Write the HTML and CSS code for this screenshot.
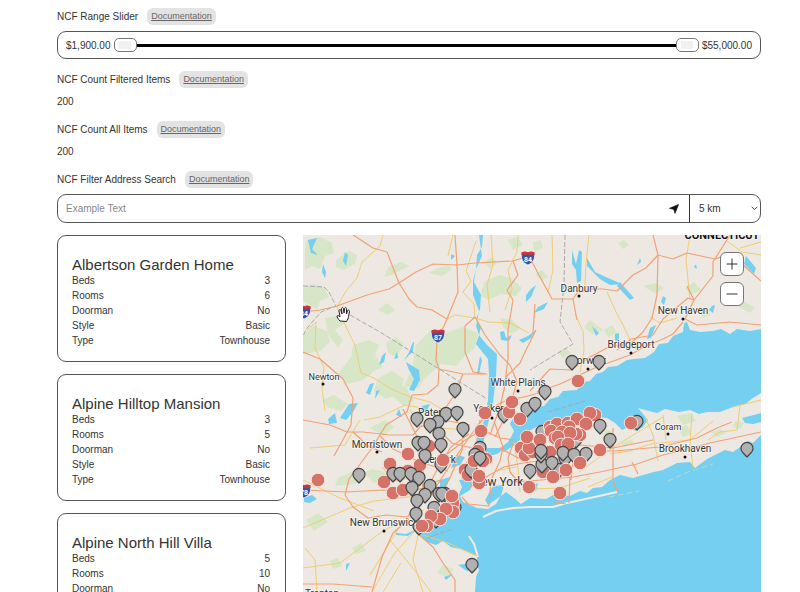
FILE: index.html
```html
<!DOCTYPE html>
<html lang="en">
<head>
<meta charset="utf-8">
<meta name="viewport" content="width=device-width, initial-scale=1">
<title>Property finder</title>
<link rel="stylesheet" href="styles.css">
</head>
<body>
<main class="page">
  <section class="block">
    <div class="heading"><span>NCF Range Slider</span><a class="doc" href="#">Documentation</a></div>
    <div class="slider">
      <output>$1,900.00</output>
      <div class="rail">
        <input type="range" min="1900" max="55000" value="1900" aria-label="Minimum price">
        <input type="range" min="1900" max="55000" value="55000" aria-label="Maximum price">
      </div>
      <output>$55,000.00</output>
    </div>
  </section>
  <section class="block">
    <div class="heading"><span>NCF Count Filtered Items</span><a class="doc" href="#">Documentation</a></div>
    <p class="count">200</p>
  </section>
  <section class="block">
    <div class="heading"><span>NCF Count All Items</span><a class="doc" href="#">Documentation</a></div>
    <p class="count">200</p>
  </section>
  <section class="block">
    <div class="heading"><label for="address">NCF Filter Address Search</label><a class="doc" href="#">Documentation</a></div>
    <form class="search">
      <input id="address" class="address" type="text" placeholder="Example Text">
      <button class="locate" type="button" aria-label="Use my location">
        <svg width="10" height="10" viewBox="0 0 10 10"><path d="M9.6.4 6 9.4 4.8 5.4.4 4.3Z" fill="#111" stroke="#111" stroke-width=".6" stroke-linejoin="round"/></svg>
      </button>
      <div class="radius">
        <select aria-label="Radius"><option>5 km</option><option>10 km</option><option>25 km</option></select>
        <svg class="chevron" width="7" height="5" viewBox="0 0 7 5"><path d="M.7.8 3.500 3.600 6.300.8" fill="none" stroke="#444"/></svg>
      </div>
    </form>
  </section>

  <section class="results">
    <div class="list">
      <article class="card">
        <h2>Albertson Garden Home</h2>
        <dl>
          <div><dt>Beds</dt><dd>3</dd></div>
          <div><dt>Rooms</dt><dd>6</dd></div>
          <div><dt>Doorman</dt><dd>No</dd></div>
          <div><dt>Style</dt><dd>Basic</dd></div>
          <div><dt>Type</dt><dd>Townhouse</dd></div>
        </dl>
      </article>
      <article class="card">
        <h2>Alpine Hilltop Mansion</h2>
        <dl>
          <div><dt>Beds</dt><dd>3</dd></div>
          <div><dt>Rooms</dt><dd>5</dd></div>
          <div><dt>Doorman</dt><dd>No</dd></div>
          <div><dt>Style</dt><dd>Basic</dd></div>
          <div><dt>Type</dt><dd>Townhouse</dd></div>
        </dl>
      </article>
      <article class="card">
        <h2>Alpine North Hill Villa</h2>
        <dl>
          <div><dt>Beds</dt><dd>5</dd></div>
          <div><dt>Rooms</dt><dd>10</dd></div>
          <div><dt>Doorman</dt><dd>No</dd></div>
        </dl>
      </article>
    </div>

    <div class="map">
      <svg class="canvas" viewBox="303 235 458 357" preserveAspectRatio="xMinYMin slice" role="img" aria-label="Map of homes around New York">
        <defs>
          <path id="pin" d="M0 8C-2 5.200-6 3.400-6-.6A6 6 0 0 1 6-.6C6 3.400 2 5.200 0 8Z"/>
          <circle id="dot" r="6.800"/>
          <g id="shield">
            <path d="M-6.500-5.500Q-3-7 0-5.500 3-7 6.500-5.500C7.500 1 5 5 0 7-5 5-7.500 1-6.500-5.500Z" fill="#3b53a4" stroke="#fff" stroke-width=".7"/>
            <path d="M-6.500-5.800Q-3-7.200 0-5.800 3-7.200 6.500-5.800L6.700-3.300H-6.700Z" fill="#cf3438"/>
          </g>
        </defs>
        <rect class="land" x="303" y="235" width="458" height="357"/>

        <g class="green">
          <path d="M306 240l14-3 12 6 2 10-9 3-5 13-8-3-7 4v-20ZM336 260l13-9 8 4-2 9-12 6-7-3ZM303 288l9-4 12 3 5 10-9 4-3 8-14-8ZM303 335l10-9 14 5 3 11-10 9-17 3ZM325 318l16-3 4 8-10 7 8 10-5 8-10-14ZM378 310l9-7 8 7-7 5ZM353 345l16-5 10 5-4 10 8 12-9 4-11 9-16 4-9-10 13-17ZM386 343l10-6 8 8-8 12-8-4Z"/>
          <path d="M416 345l14-14 10 4 22-8 16 6-3 15-10 8-9 10-15-2-16 14-7 11-14-3 8-17ZM378 378l14-7 12 8-4 14-14 6-12-8ZM436 269l12-4 4 4-10 7-13-3ZM485 281l14-6 12 3 11 10-6 8-15-2-13 6-8-5ZM500 318l12 2 9 8-9 6-9-7ZM508 240l10-3 5 8-10 5ZM388 267l13-5 8 4-17 9-8 2ZM322 400l12-5 14 9-7 7-14-4ZM390 384l16 3 8 14-10 5-12-10ZM370 428l15-8 9 7-10 9ZM364 473l8-4 13 3 2 8-13 3Z"/>
          <path d="M338 478l18-8 7 8-8 6-20 2ZM306 520l12-7 10 9-14 9ZM352 548l9-5 5 8-10 3ZM330 561l8-3 4 8-9 3ZM437 573l6-8 10 4-4 9ZM604 330l8-5 5 8-9 4ZM590 320l13 10-11 4-8-7ZM643 286l12-3 9 5-8 6ZM685 288l9-6 7 8-11 5ZM660 346l12-6 4 8-9 6-8-2ZM736 305l8-3 11 5-5 6ZM533 242l8-2 2 8-9 3ZM535 274l7-4 6 7-6 4ZM677 416l13-3 6 8-13 4ZM678 428l9-3 5 9-9 3ZM710 432l10-3 6 4-8 4ZM735 421l9 2-4 6-8-2ZM620 443l11-4 3 4-9 4ZM606 430l7 1-4 7-8 1ZM484 262l8-5 5 6-7 6ZM558 352l8-4 5 5-8 5ZM618 243l6-3 5 5-6 4ZM700 312l7-3 3 6-7 3Z"/>
        </g>

        <g class="water">
          <path d="M761 329 750 331 737 329 730 334 721 329 713 331 700 332 690 330 687 322 684 323 683 332 673 336 668 343 659 344 654 352 645 358 634 359 627 360 617 366 608 367 603 372 596 374 590 381 583 382 577 390 563 391 558 397 550 399 544 406 537 407 530 413 520 416 513 418 510 424 514 431 511 437 508 442 499 449 504 452 513 446 519 441 526 432 531 430 538 426 547 429 560 424 572 420 585 416 598 417 607 418 615 423 622 430 629 427 636 431 643 427 648 420 638 408 645 410 657 413 665 409 679 412 690 410 699 414 707 412 720 412 733 407 745 404 753 398 761 393Z"/>
          <path d="M761 413 750 416 742 418 745 423 753 424 761 422Z"/>
          <path d="M761 435 753 443 748 441 743 445 733 452 725 450 717 454 707 459 695 468 690 462 677 463 663 470 654 472 643 475 633 478 620 475 610 480 602 487 593 488 587 493 580 491 570 496 553 495 546 499 530 498 521 504 514 498 506 492 500 497 496 504 488 509 477 508 463 502 460 496 470 490 474 483 467 479 459 480 462 487 459 494 452 496 448 507 440 523 420 534 427 542 436 545 443 541 451 547 460 549 468 552 477 556 477 565 479 570 476 577 475 592H761Z"/>
          <path d="M479 235h4l-1 12-5 8-1 14-2 13 7 13-1 14-4 10 5 8-2 8 8 10 10 9-1 22-3 27-5 21-6 23-9 27-7 5 8-32 9-22 5-25 1-26-1-15-12-15 3-9-3-9 3-15-6-16 0-14 3-12 6-13Z"/>
          <path d="M308 240l9-2-5 11 6 6-7-2ZM323 264l3 8-1 6-3-6ZM345 252l3 3-2 11-3-5ZM451 254l4 2-4 4ZM413 342l-4 10-5 9 5-6 4-3 1-10ZM406 362l13 8 1 10-6 11-5-1 5-11-5-9ZM397 352l-3 7 4-1ZM382 356l4-4-2 10-5 3ZM366 393l4-9 4-1-4 12ZM376 391l4-1-5 9ZM480 356l2 4-3 14h-2ZM526 295l5-6 5-4-5 12-5 5ZM538 307l10-5-4 7-10 4ZM500 332l4-1 2 7 6-3-3 6-8-1ZM519 340l9-4 8-6-5 8-8 5ZM572 250l4 14 3-14 3 2-1 29-4 2-1-13-4-6ZM587 258l8 14 13 6 14 6-12 1-10-6-13-13ZM620 282l14 16-4 2-13-14ZM712 306l3-1-2 8-4-3ZM746 256l10 12-2 6-10-10ZM640 258l1 4-4 3ZM663 296l3 2-2 7-3-3ZM696 264l1 5-3-2ZM592 326l7 7-3 3ZM615 334l4-1v11l-4-4ZM650 328l6-3-5 13-4 1ZM422 406l8-2-3 7-7 1ZM399 409l3 8-6-2ZM349 404l9-1-5 9-7 8-6-2ZM328 419l7-6 2 10-8 1ZM304 498l8-3 5 4-7 4-6-1ZM396 533l10 1 11-5-9 7-12-1ZM458 565l13-2 8 4-12 4ZM444 577l9-3-7 6ZM346 564l4-1-4 8ZM456 455l9 2-5 8-9 3ZM478 452l10-4 17 0-8 6-12 3ZM530 486l8-3-2 8ZM440 480l10-3-4 11-6 4ZM485 500l8-14 11-1-3 11-13 9Z"/>
        </g>

        <path class="sand" d="M483 517 496 511 513 508 530 507 553 507 567 503 590 498 617 492M469 536l5 8 4 13"/>
        <path class="shoal" d="M609 497l30-6M668 481l20-9 25-8"/>

        <g class="yellow">
          <path d="M383 235 380 246 362 262 357 278 346 291 337 307 346 327 355 345 361 373 374 378 391 389 411 397 430 402 443 410"/>
          <path d="M307 330 316 322 315 348 324 367 322 388 325 411M453 235 448 256M476 241 466 271 471 281 463 292 474 304 475 318 488 322 510 323 529 333M518 235 517 252 508 270 512 289 505 310M491 235 493 265 487 285 490 312M447 319 455 315 475 318"/>
          <path d="M552 235 553 270 548 292M589 235 586 263 585 285 590 290M607 292 617 314 623 325 631 342M690 235 686 260 690 300M575 314 583 331 584 350 580 372M740 248 761 242M727 241 742 252 761 255M650 317 660 323 677 318"/>
          <path d="M303 528 350 508 374 501 425 495M303 480 340 498 374 511M303 568 340 563 383 531 424 510M317 592 315 560 305 548M372 592 394 554 420 525 413 560 423 592M423 535 448 543 477 556M398 529 370 575M437 418 422 408 405 405 380 417 364 420M360 420 345 445 310 448M410 410 418 425 438 428 470 430M390 540 412 567 431 592M382 467 394 481 422 476M383 592 401 563M533 489 560 488 590 478M514 442 518 468 520 492M500 470 516 467M579 472 615 446 663 417"/>
          <path d="M645 417 653 435 658 461M692 413 690 444 693 467M663 415 666 440M740 406 737 430 720 432 708 440M733 407 761 400M610 454 630 451 651 444 690 440 713 421M588 487 612 477"/>
        </g>
        <g class="orange">
          <path d="M353 235 373 248 387 252 399 283 409 299 417 307 432 310 447 319"/>
          <path d="M303 312 320 310 337 306 367 295 389 289 399 283 416 272 433 264 457 265 475 263 513 261 529 256 540 277 552 299 573 299 577 293 590 289 603 289 617 291 633 275 646 268 658 255 673 259 687 253 715 259 724 256 742 264 761 281"/>
          <path d="M455 235 457 265 458 292 447 319 437 342 436 360 439 369 438 385 427 394 412 395 407 412 386 425 372 448 349 479 345 495 353 507 368 518 386 515 407 517 431 495 443 476 459 452 478 425 493 407 505 401 528 396 549 390"/>
          <path d="M475 317 465 326 465 352 473 372 487 374 463 374 439 369M463 374 454 396 441 414M475 317 485 335 500 355 510 365 517 382 509 409 495 437M536 330 526 350 520 363 507 376 500 407 490 435M513 261 518 275 507 290 513 300 508 330 508 358 504 391M533 333 535 304"/>
          <path d="M653 235 658 255 657 295 652 318 643 332 632 342 607 348 590 357 570 370 550 369 530 391M730 235 713 262 713 276 694 300 688 298 663 319 653 335 631 339 617 350M694 300 685 319 697 325 730 322 761 325M683 322 673 334 663 339 644 347 630 355 597 367 560 384 537 392M573 299 577 320M694 300 687 286"/>
          <path d="M303 352 320 359 343 379 353 398 351 425 334 456M303 420 330 425 347 432 363 432 390 435 413 435 420 427 443 420 470 425M303 490 347 492 383 490 413 492 440 480M409 519 393 533 382 557 372 592M415 512 417 533 433 547 443 563 455 580 455 592M303 584 333 584 372 587M380 436 393 449 420 462 448 471M403 409 424 450 422 500M353 432 368 446 382 452"/>
          <path d="M417 534 418 510 426 491 440 464 451 447 469 434M446 455 464 441 483 429M436 427 452 443 476 449M463 425 462 450 449 480 438 497M480 420 476 446 461 473M494 421 503 447 500 461 491 480 489 506 468 504 462 497M513 444 508 458 510 472 520 484M470 487 484 478 504 467 523 463 553 459 585 451 615 451 660 447 697 438 717 428 732 422"/>
          <path d="M505 482 530 481 573 477 600 472 637 464 663 455 710 443 761 432M500 448 520 459 550 456 580 445 613 448 653 440M613 428 613 480 617 491M570 476 569 503M632 462 638 474M554 502 566 504M487 432 500 438 515 440M574 456 571 480"/>
        </g>
        <path class="border" d="M303 286 324 287 329 292 336 306 321 312 307 328 303 336M350 315 380 332 420 357 487 399M565 235 564 285 560 322 573 344 530 370M548 412 585 401M427 538 452 529"/>

        <use href="#shield" x="528" y="258"/><use href="#shield" x="438" y="336"/><use href="#shield" x="304" y="312"/><use href="#shield" x="304" y="491"/>
        <g class="route"><text x="528" y="262">84</text><text x="438" y="340">87</text><text x="304" y="316">84</text><text x="304" y="495">78</text></g>

        <g class="town">
          <text x="579" y="292">Danbury</text><text x="683" y="314">New Haven</text><text x="631" y="348">Bridgeport</text>
          <text class="small" x="324" y="380">Newton</text><text x="518" y="386">White Plains</text><text x="588" y="364">Norwalk</text>
          <text x="491" y="412">Yonkers</text><text x="438" y="416">Paterson</text><text x="439" y="463">Newark</text>
          <text x="377" y="448">Morristown</text><text class="city" x="498" y="486">New York</text><text x="384" y="526">New Brunswick</text>
          <text class="small" x="668" y="430">Coram</text><text x="685" y="452">Brookhaven</text><text x="322" y="597">Trenton</text>
          <text class="state" x="722" y="239">CONNECTICUT</text>
        </g>
        <path class="spots" d="M579 296h0M683 319h0M631 353h0M323 384h0M518 391h0M588 369h0M492 418h0M377 452h0M384 531h0M668 434h0M685 457h0"/>

        <g class="pins">
          <use href="#pin" x="455" y="390"/><use href="#pin" x="572" y="362"/><use href="#pin" x="599" y="362"/><use href="#pin" x="527" y="409"/><use href="#pin" x="535" y="404"/><use href="#pin" x="545" y="392"/><use href="#pin" x="504" y="415"/><use href="#pin" x="359" y="475"/>
          <use href="#pin" x="446" y="414"/><use href="#pin" x="457" y="413"/><use href="#pin" x="438" y="422"/><use href="#pin" x="417" y="419"/><use href="#pin" x="430" y="425"/><use href="#pin" x="463" y="429"/><use href="#pin" x="439" y="434"/>
          <use href="#pin" x="441" y="465"/><use href="#pin" x="445" y="494"/><use href="#pin" x="439" y="494"/><use href="#pin" x="442" y="494"/><use href="#pin" x="455" y="508"/><use href="#pin" x="434" y="508"/><use href="#pin" x="436" y="520"/><use href="#pin" x="419" y="527"/>
          <use href="#pin" x="480" y="448"/><use href="#pin" x="542" y="432"/><use href="#pin" x="637" y="422"/><use href="#pin" x="576" y="440"/><use href="#pin" x="559" y="470"/>
        </g>
        <g class="dots">
          <use href="#dot" x="318" y="480"/><use href="#dot" x="408" y="454"/><use href="#dot" x="390" y="464"/><use href="#dot" x="384" y="482"/><use href="#dot" x="393" y="493"/><use href="#dot" x="403" y="490"/><use href="#dot" x="408" y="471"/><use href="#dot" x="420" y="465"/><use href="#dot" x="429" y="446"/><use href="#dot" x="443" y="460"/>
          <use href="#dot" x="485" y="413"/><use href="#dot" x="481" y="431"/><use href="#dot" x="509" y="412"/><use href="#dot" x="512" y="402"/><use href="#dot" x="520" y="419"/><use href="#dot" x="578" y="381"/><use href="#dot" x="631" y="423"/>
          <use href="#dot" x="453" y="503"/><use href="#dot" x="453" y="512"/><use href="#dot" x="452" y="496"/><use href="#dot" x="446" y="509"/><use href="#dot" x="440" y="519"/><use href="#dot" x="431" y="516"/><use href="#dot" x="427" y="526"/><use href="#dot" x="422" y="526"/>
          <use href="#dot" x="478" y="451"/><use href="#dot" x="486" y="459"/><use href="#dot" x="483" y="461"/><use href="#dot" x="465" y="470"/><use href="#dot" x="468" y="475"/><use href="#dot" x="479" y="483"/>
          <use href="#dot" x="521" y="448"/><use href="#dot" x="525" y="455"/><use href="#dot" x="533" y="452"/><use href="#dot" x="529" y="448"/><use href="#dot" x="527" y="437"/><use href="#dot" x="540" y="440"/><use href="#dot" x="550" y="452"/><use href="#dot" x="543" y="472"/>
          <use href="#dot" x="550" y="427"/><use href="#dot" x="557" y="424"/><use href="#dot" x="568" y="423"/><use href="#dot" x="577" y="419"/><use href="#dot" x="595" y="415"/><use href="#dot" x="590" y="413"/><use href="#dot" x="586" y="424"/><use href="#dot" x="580" y="435"/><use href="#dot" x="576" y="434"/><use href="#dot" x="569" y="427"/><use href="#dot" x="551" y="431"/><use href="#dot" x="555" y="438"/><use href="#dot" x="562" y="432"/><use href="#dot" x="570" y="433"/><use href="#dot" x="558" y="437"/><use href="#dot" x="561" y="445"/><use href="#dot" x="568" y="444"/>
          <use href="#dot" x="600" y="450"/><use href="#dot" x="560" y="493"/><use href="#dot" x="529" y="487"/>
        </g>
        <g class="pins">
          <use href="#pin" x="441" y="445"/><use href="#pin" x="418" y="443"/><use href="#pin" x="424" y="443"/><use href="#pin" x="425" y="456"/>
          <use href="#pin" x="412" y="488"/><use href="#pin" x="393" y="474"/><use href="#pin" x="400" y="474"/><use href="#pin" x="411" y="474"/><use href="#pin" x="419" y="478"/><use href="#pin" x="430" y="486"/><use href="#pin" x="425" y="495"/><use href="#pin" x="417" y="501"/><use href="#pin" x="416" y="514"/><use href="#pin" x="472" y="565"/>
          <use href="#pin" x="475" y="455"/><use href="#pin" x="471" y="470"/>
          <use href="#pin" x="542" y="465"/><use href="#pin" x="541" y="455"/><use href="#pin" x="541" y="451"/><use href="#pin" x="530" y="471"/><use href="#pin" x="565" y="459"/><use href="#pin" x="563" y="453"/><use href="#pin" x="586" y="454"/><use href="#pin" x="574" y="455"/><use href="#pin" x="552" y="463"/>
          <use href="#pin" x="600" y="426"/><use href="#pin" x="610" y="440"/><use href="#pin" x="747" y="449"/>
        </g>
        <g class="dots"><use href="#dot" x="474" y="461"/><use href="#dot" x="479" y="476"/><use href="#dot" x="553" y="477"/><use href="#dot" x="566" y="470"/><use href="#dot" x="580" y="463"/></g>
        <g class="pins"><use href="#pin" x="480" y="458"/></g>

        <path class="hand" d="M340 321c-2-2-3-4-3-5 1-1 2 0 3 1l-1-6c0-2 2-2 2 0l1 3-.5-5c0-2 2-2 2 0l.5 4 .5-4c0-2 2-2 2 0v5l1-3c.5-1.500 2-1 2 .5l-1 5c0 2-1 3-2 5Z"/>
      </svg>
      <div class="zoom">
        <button type="button" aria-label="Zoom in"><svg width="12" height="12" viewBox="0 0 12 12"><path d="M6 .5v11M.5 6h11"/></svg></button>
        <button type="button" aria-label="Zoom out"><svg width="12" height="12" viewBox="0 0 12 12"><path d="M.5 6h11"/></svg></button>
      </div>
    </div>
  </section>
</main>
</body>
</html>
```
FILE: styles.css
```css
* { box-sizing: border-box; }

body {
  margin: 0;
  background: #fff;
  color: #333;
  font: 10px/15px "Liberation Sans", Arial, sans-serif;
}

.page {
  display: flex;
  flex-direction: column;
  gap: 12px;
  height: 100vh;
  padding: 8px 39px 0 57px;
  overflow: hidden;
}

.block { display: grid; gap: 6px; }

.heading {
  display: flex;
  align-items: center;
  gap: 9px;
  height: 17px;
}

.doc {
  padding: 0 4px;
  border-radius: 6px;
  background: #e3e3e3;
  color: #666;
  font-size: 9px;
  line-height: 17px;
}

.count { margin: 0; }

.slider {
  display: flex;
  align-items: center;
  gap: 3px;
  height: 28px;
  padding: 0 8px;
  border: 1px solid #555;
  border-radius: 9px;
}

.rail {
  display: grid;
  flex: 1;
  align-items: center;
  background: linear-gradient(#000, #000) center / 100% 3px no-repeat;
}

.rail input {
  grid-area: 1 / 1;
  width: 100%;
  height: 14px;
  margin: 0;
  background: none;
  appearance: none;
  pointer-events: none;
}

.rail input::-webkit-slider-thumb {
  width: 23px;
  height: 14px;
  border: 1px solid #777;
  border-radius: 5px;
  background: linear-gradient(#f1f1f1, #f1f1f1) center / 12px 8px no-repeat #fff;
  appearance: none;
  pointer-events: auto;
}

.search {
  display: flex;
  height: 29px;
  border: 1px solid #555;
  border-radius: 9px;
  overflow: hidden;
}

.address {
  flex: 1;
  min-width: 0;
  padding: 0 8px;
  border: 0;
  background: none;
  color: inherit;
  font: inherit;
}

.address::placeholder { color: #888; }

.locate {
  display: grid;
  place-items: center;
  width: 30px;
  padding: 0;
  border: 0;
  background: none;
}

.radius {
  display: grid;
  align-items: center;
  width: 71px;
  border-left: 1px solid #333;
}

.radius select {
  grid-area: 1 / 1;
  height: 100%;
  padding: 0 9px;
  border: 0;
  background: none;
  color: inherit;
  font: inherit;
  appearance: none;
}

.chevron {
  grid-area: 1 / 1;
  justify-self: end;
  margin-right: 2px;
  pointer-events: none;
}

.results {
  display: grid;
  flex: 1;
  grid-template-columns: 1fr 2fr;
  grid-template-rows: minmax(0, 1fr);
  gap: 17px;
  min-height: 0;
}

.list {
  display: flex;
  flex-direction: column;
  gap: 12px;
}

.card {
  flex: none;
  padding: 20px 15px 13px 14px;
  border: 1px solid #555;
  border-radius: 9px;
}

.card h2 {
  margin: 0;
  font-size: 15px;
  font-weight: 400;
  line-height: 17px;
}

.card dl { margin: 0; }
.card dl div { display: flex; justify-content: space-between; }
.card dd { margin: 0; }

.map { position: relative; min-width: 0; min-height: 0; }
.canvas { display: block; width: 100%; height: 100%; }

.land { fill: #ede9e2; }
.green { fill: #d6e6c6; }
.water { fill: #74cff0; }
.sand { fill: none; stroke: #f0ece2; stroke-width: 2; }
.shoal { fill: none; stroke: #b5dcc4; stroke-dasharray: 6 3; }

.yellow, .orange { fill: none; stroke-linejoin: round; }
.yellow { stroke: #f0cd73; }
.orange { stroke: #f2a176; stroke-width: 1.2; }
.border { fill: none; stroke: #a9a9ad; stroke-dasharray: 5 2; }

.town {
  fill: #333;
  stroke: #fff;
  stroke-width: 1.5;
  stroke-opacity: .7;
  paint-order: stroke;
  font: 10px Roboto, sans-serif;
  text-anchor: middle;
}

.town .small { font-size: 9px; }
.town .city { font-size: 12px; }
.town .state { fill: #111; font-size: 11px; font-weight: 700; }

.route {
  fill: #fff;
  font: bold 7px Roboto, sans-serif;
  text-anchor: middle;
}

.spots { stroke: #111; stroke-width: 3; stroke-linecap: round; }
.pins { fill: #b1b1b1; stroke: #444; stroke-width: 1.2; }
.dots { fill: #d67369; stroke: #f6e4dc; }
.hand { fill: #fff; stroke: #222; }

.zoom {
  position: absolute;
  top: 17px;
  right: 17px;
  display: grid;
  gap: 6px;
}

.zoom button {
  display: grid;
  place-items: center;
  width: 24px;
  height: 24px;
  padding: 0;
  border: 1px solid #777;
  border-radius: 6px;
  background: #fff;
}

.zoom path { stroke: #333; }
```
